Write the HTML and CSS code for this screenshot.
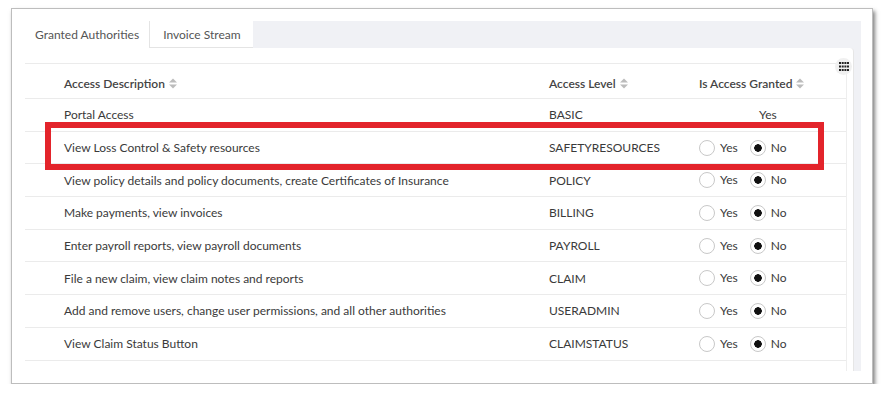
FILE: index.html
```html
<!DOCTYPE html>
<html lang="en">
  <head>
    <title>Granted Authorities</title>
    <link rel="stylesheet" href="styles.css">
  </head>
  <body>
    <div class="frame">
      <div class="tabs">
        <div class="tab active">Granted Authorities</div>
        <div class="tab">Invoice Stream</div>
      </div>
      <div class="panel">
        <div class="card">
          <span class="chooser">
            <svg width="10" height="9" viewBox="0 0 10 9">
              <rect x="0" y="0" width="2" height="2"/><rect x="2.7" y="0" width="2" height="2"/><rect x="5.4" y="0" width="2" height="2"/><rect x="8" y="0" width="2" height="2"/>
              <rect x="0" y="3.5" width="2" height="2"/><rect x="2.7" y="3.5" width="2" height="2"/><rect x="5.4" y="3.5" width="2" height="2"/><rect x="8" y="3.5" width="2" height="2"/>
              <rect x="0" y="7" width="2" height="2"/><rect x="2.7" y="7" width="2" height="2"/><rect x="5.4" y="7" width="2" height="2"/><rect x="8" y="7" width="2" height="2"/>
            </svg>
          </span>
          <div class="grid">
            <table>
              <thead>
                <tr>
                  <th class="desc">Access Description <svg class="sort" width="8" height="11" viewBox="0 0 8 11"><path d="M0 4.5 L4 0.5 L8 4.5 Z M0 6.5 L4 10.5 L8 6.5 Z"/></svg></th>
                  <th class="level">Access Level <svg class="sort" width="8" height="11" viewBox="0 0 8 11"><path d="M0 4.5 L4 0.5 L8 4.5 Z M0 6.5 L4 10.5 L8 6.5 Z"/></svg></th>
                  <th class="granted">Is Access Granted <svg class="sort" width="8" height="11" viewBox="0 0 8 11"><path d="M0 4.5 L4 0.5 L8 4.5 Z M0 6.5 L4 10.5 L8 6.5 Z"/></svg></th>
                </tr>
              </thead>
              <tbody>
                <tr>
                  <td class="desc">Portal Access</td>
                  <td class="level">BASIC</td>
                  <td class="granted"><span class="plain">Yes</span></td>
                </tr>
                <tr>
                  <td class="desc">View Loss Control &amp; Safety resources</td>
                  <td class="level">SAFETYRESOURCES</td>
                  <td class="granted"><span class="radio"></span>Yes<span class="radio on"></span>No</td>
                </tr>
                <tr>
                  <td class="desc">View policy details and policy documents, create Certificates of Insurance</td>
                  <td class="level">POLICY</td>
                  <td class="granted"><span class="radio"></span>Yes<span class="radio on"></span>No</td>
                </tr>
                <tr>
                  <td class="desc">Make payments, view invoices</td>
                  <td class="level">BILLING</td>
                  <td class="granted"><span class="radio"></span>Yes<span class="radio on"></span>No</td>
                </tr>
                <tr>
                  <td class="desc">Enter payroll reports, view payroll documents</td>
                  <td class="level">PAYROLL</td>
                  <td class="granted"><span class="radio"></span>Yes<span class="radio on"></span>No</td>
                </tr>
                <tr>
                  <td class="desc">File a new claim, view claim notes and reports</td>
                  <td class="level">CLAIM</td>
                  <td class="granted"><span class="radio"></span>Yes<span class="radio on"></span>No</td>
                </tr>
                <tr>
                  <td class="desc">Add and remove users, change user permissions, and all other authorities</td>
                  <td class="level">USERADMIN</td>
                  <td class="granted"><span class="radio"></span>Yes<span class="radio on"></span>No</td>
                </tr>
                <tr>
                  <td class="desc">View Claim Status Button</td>
                  <td class="level">CLAIMSTATUS</td>
                  <td class="granted"><span class="radio"></span>Yes<span class="radio on"></span>No</td>
                </tr>
              </tbody>
            </table>
          </div>
        </div>
      </div>
      <div class="highlight"></div>
    </div>
  </body>
</html>
```

FILE: styles.css
```css
body {
  margin: 0;
  padding: 8px 0 0 11px;
  background: #fff;
  font-family: Lato, "Liberation Sans", sans-serif;
  font-size: 12px;
  color: #3a3a3a;
}
.frame {
  position: relative;
  box-sizing: border-box;
  width: 862px;
  height: 376px;
  padding: 12px 0 0 13px;
  background: #fff;
  border: 1px solid #bdbdbd;
  box-shadow: 2px 3px 4px rgba(0, 0, 0, 0.5);
}
.tabs {
  display: flex;
  width: 836px;
  height: 27px;
  background: #f0f1f5;
}
.tab {
  display: flex;
  align-items: center;
  padding: 0 12px 0 13px;
  background: #fff;
  color: #555;
  border-bottom: 1px solid #e4e4e4;
  box-sizing: border-box;
}
.tab.active {
  padding: 0 10px;
  border-bottom-color: #fff;
}
.tab + .tab {
  border-left: 1px solid #e4e4e4;
}
.panel {
  width: 836px;
  height: 323px;
  background: #f0f1f5;
}
.card {
  position: relative;
  box-sizing: border-box;
  width: 829px;
  height: 323px;
  padding: 15px 6px 0 0;
  background: #fff;
  border-right: 1px solid #e6e6e6;
  border-radius: 0 4px 0 0;
}
.grid {
  height: 308px;
  border-right: 1px solid #eeeeee;
  overflow: hidden;
}
table {
  width: 100%;
  border-collapse: collapse;
}
th, td {
  height: 31.7px;
  padding: 0;
  text-align: left;
  border-top: 1px solid #ebebeb;
  border-bottom: 1px solid #ebebeb;
  white-space: nowrap;
}
th {
  height: 30px;
  padding-top: 4px;
  font-weight: 600;
  color: #444;
}
.desc {
  width: 485px;
  padding-left: 39px;
}
.level {
  width: 142px;
}
.granted {
  padding-left: 8px;
}
.plain {
  display: inline-block;
  padding-left: 60px;
}
.sort {
  margin-left: 1px;
  vertical-align: -1px;
  fill: #bcbcbc;
}
.radio {
  display: inline-block;
  box-sizing: border-box;
  width: 16px;
  height: 16px;
  margin-right: 5px;
  vertical-align: -4px;
  border: 1px solid #c8c8c8;
  border-radius: 50%;
  background: #fff;
}
.radio.on {
  margin-left: 12px;
  background: radial-gradient(circle, #111 3.5px, #fff 4px);
}
.chooser {
  position: absolute;
  top: 10px;
  right: 1px;
  display: flex;
  align-items: center;
  justify-content: center;
  width: 17px;
  height: 17px;
  border-radius: 50%;
  background: #f0f0f0;
  fill: #222;
}
.highlight {
  position: absolute;
  left: 33px;
  top: 113px;
  width: 779px;
  height: 48px;
  box-sizing: border-box;
  border: 6px solid #e3242b;
}
```
